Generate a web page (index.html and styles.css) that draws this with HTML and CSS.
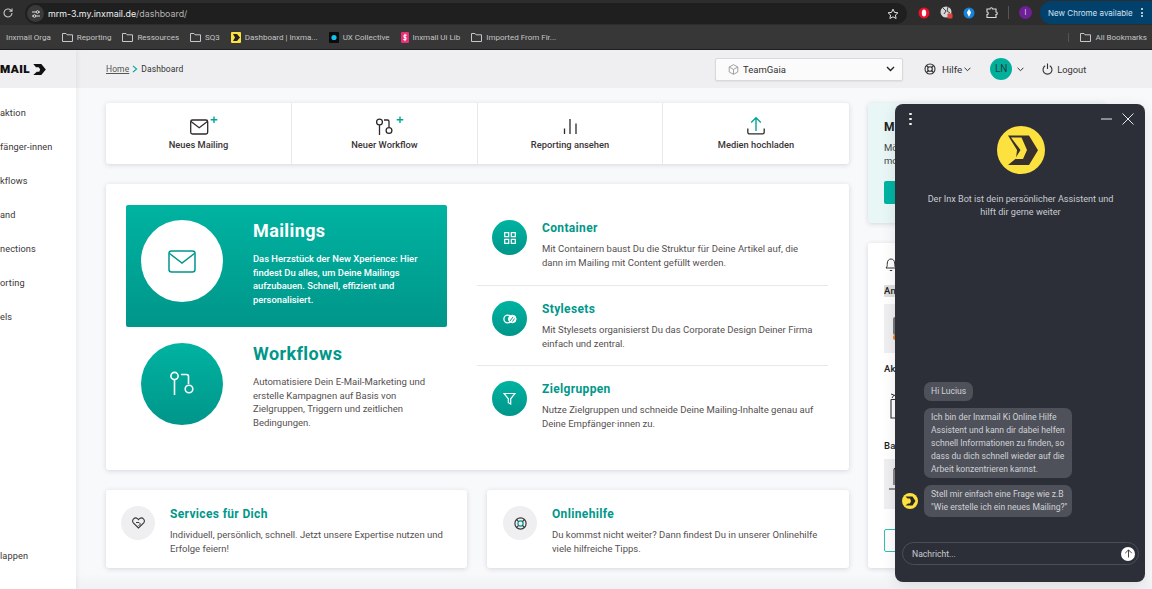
FILE: index.html
```html
<!DOCTYPE html>
<html lang="de">
<head>
<meta charset="utf-8">
<title>Dashboard | Inxmail</title>
<link rel="stylesheet" href="styles.css">
</head>
<body>
<header class="browser">
  <div class="toolbar">
    <svg class="reload" width="12" height="12" viewBox="0 0 12 12"><path d="M10 6a4 4 0 1 1-1.2-2.9L10 4.2M10 1.6v2.700H7.300" fill="none" stroke="#c7c7c7" stroke-width="1.100"/></svg>
    <div class="omnibox">
      <span class="site-btn"><svg width="10" height="10" viewBox="0 0 10 10"><path d="M1 3h4M8 3h1M1 7h1M5 7h4" stroke="#ddd" stroke-width="1"/><circle cx="6.500" cy="3" r="1.300" fill="none" stroke="#ddd"/><circle cx="3.500" cy="7" r="1.300" fill="none" stroke="#ddd"/></svg></span>
      <span class="url"><b>mrm-3.my.inxmail.de</b>/dashboard/</span>
      <svg class="star" width="12" height="12" viewBox="0 0 12 12"><path d="M6 1.200l1.500 3.200 3.400.4-2.500 2.300.7 3.400L6 8.800l-3.100 1.700.7-3.400L1.100 4.800l3.400-.4z" fill="none" stroke="#e3e3e3" stroke-width="1"/></svg>
    </div>
    <div class="ext-icons">
      <svg width="12" height="12" viewBox="0 0 12 12"><circle cx="6" cy="6" r="5.500" fill="#e8112d"/><ellipse cx="6" cy="6" rx="2.200" ry="3.500" fill="#fff"/></svg>
      <svg width="13" height="13" viewBox="0 0 13 13"><circle cx="6" cy="6" r="5.500" fill="#d5d5d5"/><path d="M3 2l3 3-2 3M8 1l-1 4 3 2" stroke="#444" fill="none"/><rect x="7.500" y="7.500" width="5" height="5" rx="1" fill="#e0423c"/></svg>
      <svg width="12" height="12" viewBox="0 0 12 12"><circle cx="6" cy="6" r="5.500" fill="#1583d8"/><path d="M6 2l2.200 3.500L6 10 3.800 5.500z" fill="#fff"/></svg>
      <svg width="13" height="13" viewBox="0 0 13 13"><path d="M2 3h3a1.300 1.300 0 0 1 2.600 0H11v3a1.300 1.300 0 0 1 0 2.600V11.500H2V8.600a1.300 1.300 0 0 0 0-2.600z" fill="none" stroke="#dcdcdc" stroke-width="1.100"/></svg>
      <span class="tb-sep"></span>
      <span class="profile">I</span>
    </div>
    <div class="update-pill"><span>New Chrome available</span><i class="kebab"><em></em><em></em><em></em></i></div>
  </div>
  <nav class="bookmarks">
    <span class="bm bm-first">Inxmail Orga</span>
    <span class="bm"><svg class="folder" width="11" height="9" viewBox="0 0 11 9"><path d="M.5 8.500V.5h3.500l1 1.300h5.500v6.700z" fill="none" stroke="#c7c7c7"/></svg>Reporting</span>
    <span class="bm"><svg class="folder" width="11" height="9" viewBox="0 0 11 9"><path d="M.5 8.500V.5h3.500l1 1.300h5.500v6.700z" fill="none" stroke="#c7c7c7"/></svg>Ressources</span>
    <span class="bm"><svg class="folder" width="11" height="9" viewBox="0 0 11 9"><path d="M.5 8.500V.5h3.500l1 1.300h5.500v6.700z" fill="none" stroke="#c7c7c7"/></svg>SQ3</span>
    <span class="bm"><svg width="10" height="11" viewBox="0 0 10 11"><rect width="10" height="11" rx="1" fill="#fde23f"/><path d="M2 2h4l3 3.500L6 9H2l2-3.500z" fill="#222"/></svg>Dashboard | Inxma...</span>
    <span class="bm"><svg width="10" height="11" viewBox="0 0 10 11"><rect width="10" height="11" rx="1" fill="#0b0b0b"/><circle cx="5" cy="5.500" r="2.600" fill="#12c2f4"/></svg>UX Collective</span>
    <span class="bm"><svg width="8" height="11" viewBox="0 0 8 11"><rect width="8" height="11" rx="1" fill="#ec2d78"/><path d="M5.800 3.200H3v2.200h2v2.200H2.200M4 1.800v7.400" stroke="#fff" fill="none"/></svg>Inxmail Ui Lib</span>
    <span class="bm"><svg class="folder" width="11" height="9" viewBox="0 0 11 9"><path d="M.5 8.500V.5h3.500l1 1.300h5.500v6.700z" fill="none" stroke="#c7c7c7"/></svg>Imported From Fir...</span>
    <span class="bm bm-all"><svg class="folder" width="11" height="9" viewBox="0 0 11 9"><path d="M.5 8.500V.5h3.500l1 1.300h5.500v6.700z" fill="none" stroke="#c7c7c7"/></svg>All Bookmarks</span>
  </nav>
</header>

<div class="app">
  <aside class="sidebar">
    <div class="brand"><span class="brand-name">mail</span>
      <svg width="13" height="13" viewBox="0 0 13 13"><path d="M.3 1H8.300L12.800 6.500 8.300 12H.3L3.800 8.800H6.200L7.200 6.500 5.800 4.200H3z" fill="#111"/></svg>
    </div>
    <ul class="side-nav">
      <li>aktion</li><li>fänger-innen</li><li>kflows</li><li>and</li><li>nections</li><li>orting</li><li>els</li>
    </ul>
    <div class="collapse">lappen</div>
  </aside>

  <div class="workspace">
    <div class="topbar">
      <div class="crumbs"><a class="crumb-link">Home</a>
        <svg width="6" height="8" viewBox="0 0 6 8"><path d="M1 .8L4.600 4 1 7.200" fill="none" stroke="#00a594" stroke-width="1.100"/></svg>
        <span>Dashboard</span></div>
      <div class="team-select">
        <svg width="11" height="11" viewBox="0 0 11 11"><path d="M5.500.7l4.300 2.300v5L5.500 10.300 1.200 8V3zM1.200 3l4.300 2.400L9.800 3M5.500 5.400v4.900" fill="none" stroke="#999" stroke-width=".9"/></svg>
        <span class="team-name">TeamGaia</span>
        <svg class="team-chev" width="9" height="6" viewBox="0 0 9 6"><path d="M1 1l3.500 3.500L8 1" fill="none" stroke="#222" stroke-width="1.400"/></svg>
      </div>
      <div class="help">
        <svg width="12" height="12" viewBox="0 0 12 12"><circle cx="6" cy="6" r="5" fill="none" stroke="#333" stroke-width="1.100"/><circle cx="6" cy="6" r="2.300" fill="none" stroke="#333" stroke-width="1.100"/><path d="M2.500 2.500l2 2M9.500 2.500l-2 2M2.500 9.500l2-2M9.500 9.500l-2-2" stroke="#333" stroke-width="1.100"/></svg>
        <span>Hilfe</span>
        <svg width="7" height="5" viewBox="0 0 7 5"><path d="M.6.8l2.900 2.900L6.400.8" fill="none" stroke="#333"/></svg>
      </div>
      <div class="user"><span class="avatar">LN</span>
        <svg width="7" height="5" viewBox="0 0 7 5"><path d="M.6.8l2.900 2.900L6.400.8" fill="none" stroke="#333"/></svg>
      </div>
      <div class="logout">
        <svg width="11" height="12" viewBox="0 0 11 12"><path d="M3.200 2.800a4.500 4.500 0 1 0 4.600 0M5.500 .5v5.500" fill="none" stroke="#333" stroke-width="1.100"/></svg>
        <span>Logout</span>
      </div>
    </div>

    <div class="content">
      <div class="col-main">
        <section class="quick card">
          <div class="quick-cell">
            <svg width="38" height="22" viewBox="0 0 38 22"><rect x="10.700" y="6" width="17" height="14" rx="1.800" fill="none" stroke="#2e2a2b" stroke-width="1.300"/><path d="M11 7.500l8.200 6.200 8.200-6.200" fill="none" stroke="#2e2a2b" stroke-width="1.300"/><path d="M34 2.500v6.500M30.700 5.800h6.600" stroke="#00a594" stroke-width="1.400"/></svg>
            <span>Neues Mailing</span>
          </div>
          <div class="quick-cell">
            <svg width="38" height="22" viewBox="0 0 38 22"><circle cx="13.500" cy="8" r="2.900" fill="none" stroke="#2e2a2b" stroke-width="1.300"/><path d="M13.500 11v10M18 6h3.500a1.500 1.500 0 0 1 1.500 1.500V13" fill="none" stroke="#2e2a2b" stroke-width="1.300"/><circle cx="23" cy="16.500" r="2.900" fill="none" stroke="#2e2a2b" stroke-width="1.300"/><path d="M34 2.500v6.500M30.700 5.800h6.600" stroke="#00a594" stroke-width="1.400"/></svg>
            <span>Neuer Workflow</span>
          </div>
          <div class="quick-cell">
            <svg width="38" height="22" viewBox="0 0 38 22"><path d="M13.500 14.500V20M19 5v15M25 9.500V20" fill="none" stroke="#2e2a2b" stroke-width="1.300"/></svg>
            <span>Reporting ansehen</span>
          </div>
          <div class="quick-cell">
            <svg width="38" height="22" viewBox="0 0 38 22"><path d="M19 17V4M14.200 8.500L19 3.800l4.800 4.700" fill="none" stroke="#00a594" stroke-width="1.400"/><path d="M10.800 14.500v3.800a1.600 1.600 0 0 0 1.600 1.600h13.200a1.600 1.600 0 0 0 1.600-1.600v-3.800" fill="none" stroke="#2e2a2b" stroke-width="1.300"/></svg>
            <span>Medien hochladen</span>
          </div>
        </section>

        <section class="overview card">
          <div class="overview-left">
            <article class="feature feature-active">
              <span class="feature-disc">
                <svg width="28" height="23" viewBox="0 0 28 23"><rect x="1" y="1" width="26" height="21" rx="2.500" fill="none" stroke="#00978a" stroke-width="1.500"/><path d="M1.500 3.500L14 13 26.500 3.500" fill="none" stroke="#00978a" stroke-width="1.500"/></svg>
              </span>
              <div class="feature-text">
                <h2>Mailings</h2>
                <p>Das Herzstück der New Xperience: Hier findest Du alles, um Deine Mailings aufzubauen. Schnell, effizient und personalisiert.</p>
              </div>
            </article>
            <article class="feature">
              <span class="feature-disc">
                <svg width="26" height="26" viewBox="0 0 26 26"><circle cx="5.500" cy="5" r="3.600" fill="none" stroke="#fff" stroke-width="1.600"/><path d="M5.500 8.700V24M12 3.500h5.500a2 2 0 0 1 2 2V13" fill="none" stroke="#fff" stroke-width="1.600"/><circle cx="20" cy="18" r="3.800" fill="none" stroke="#fff" stroke-width="1.600"/></svg>
              </span>
              <div class="feature-text">
                <h2>Workflows</h2>
                <p>Automatisiere Dein E-Mail-Marketing und erstelle Kampagnen auf Basis von Zielgruppen, Triggern und zeitlichen Bedingungen.</p>
              </div>
            </article>
          </div>
          <div class="overview-right">
            <article class="topic">
              <span class="topic-disc"><svg width="12" height="12" viewBox="0 0 12 12"><path d="M.7.7h4v4h-4zM7.300.7h4v4h-4zM.7 7.300h4v4h-4zM7.300 7.300h4v4h-4z" fill="none" stroke="#fff" stroke-width="1.200"/></svg></span>
              <div class="topic-text"><h3>Container</h3><p>Mit Containern baust Du die Struktur für Deine Artikel auf, die dann im Mailing mit Content gefüllt werden.</p></div>
            </article>
            <article class="topic">
              <span class="topic-disc"><svg width="14" height="10" viewBox="0 0 14 10"><circle cx="4.700" cy="5" r="3.800" fill="none" stroke="#fff" stroke-width="1.300"/><circle cx="9.300" cy="5" r="3.800" fill="#fff" stroke="#fff"/><path d="M7 7l3-4M9.500 7.500l2-3" stroke="#00a594"/></svg></span>
              <div class="topic-text"><h3>Stylesets</h3><p>Mit Stylesets organisierst Du das Corporate Design Deiner Firma einfach und zentral.</p></div>
            </article>
            <article class="topic">
              <span class="topic-disc"><svg width="13" height="13" viewBox="0 0 13 13"><path d="M1 1.500h11L7.700 6.800v5.200L5.300 10.700V6.800z" fill="none" stroke="#fff" stroke-width="1.200"/></svg></span>
              <div class="topic-text"><h3>Zielgruppen</h3><p>Nutze Zielgruppen und schneide Deine Mailing-Inhalte genau auf Deine Empfänger·innen zu.</p></div>
            </article>
          </div>
        </section>

        <section class="extras">
          <article class="extra card">
            <span class="extra-disc"><svg width="13" height="12" viewBox="0 0 13 12"><path d="M6.500 11L1.300 5.800a3 3 0 0 1 4.200-4.200l1 1 1-1a3 3 0 0 1 4.200 4.200z" fill="none" stroke="#3a3a3a" stroke-width="1.100"/><path d="M4 5.500h3l1.500 1.500-2 2" fill="none" stroke="#3a3a3a" stroke-width="1"/></svg></span>
            <div class="extra-text"><h3>Services für Dich</h3><p>Individuell, persönlich, schnell. Jetzt unsere Expertise nutzen und Erfolge feiern!</p></div>
          </article>
          <article class="extra card">
            <span class="extra-disc"><svg width="13" height="13" viewBox="0 0 13 13"><circle cx="6.500" cy="6.500" r="5.600" fill="none" stroke="#3a3a3a" stroke-width="1.200"/><circle cx="6.500" cy="6.500" r="2.600" fill="none" stroke="#00978a" stroke-width="1.200"/><path d="M2.600 2.600l2 2M10.400 2.600l-2 2M2.600 10.400l2-2M10.400 10.400l-2-2" stroke="#3a3a3a" stroke-width="1.200"/></svg></span>
            <div class="extra-text"><h3>Onlinehilfe</h3><p>Du kommst nicht weiter? Dann findest Du in unserer Onlinehilfe viele hilfreiche Tipps.</p></div>
          </article>
        </section>
      </div>

      <div class="col-side">
        <section class="promo card">
          <h4>M</h4>
          <p>Mö<br>mo</p>
          <span class="promo-btn"></span>
        </section>
        <section class="notes card">
          <svg class="bell" width="12" height="15" viewBox="0 0 12 15"><path d="M1 11c1.500-1.500 1.200-3 1.300-5C2.500 3.500 4 2 6 2s3.500 1.500 3.700 4c.1 2-.2 3.500 1.300 5zM4.800 13.500h2.400" fill="none" stroke="#333" stroke-width="1"/></svg>
          <span class="note-label note-mark">An</span>
          <div class="note-block note-block-a"><span class="chip-grey"></span><span class="chip-orange"></span></div>
          <span class="note-label note-akt">Akt</span>
          <svg class="note-clip" width="11" height="26" viewBox="0 0 11 26"><path d="M1 6.500h10M1 6.500V25h10" fill="none" stroke="#333" stroke-width="1.100"/><path d="M1 1l4 1.500M2 5l2-3" stroke="#333"/></svg>
          <span class="note-label note-ban">Ba</span>
          <div class="note-block note-block-b"><svg width="11" height="24" viewBox="0 0 11 24"><path d="M5 18V3a2 2 0 0 1 2-2h4M0 22h11" fill="none" stroke="#333" stroke-width="1.100"/></svg></div>
          <span class="note-btn"></span>
        </section>
      </div>
    </div>
  </div>

  <aside class="chat">
    <div class="chat-head">
      <i class="chat-dots"><em></em><em></em><em></em></i>
      <div class="chat-win">
        <svg width="11" height="2" viewBox="0 0 11 2"><path d="M0 1h11" stroke="#e8e8e8"/></svg>
        <svg width="12" height="12" viewBox="0 0 12 12"><path d="M.5.5l11 11M11.500.5l-11 11" stroke="#e8e8e8"/></svg>
      </div>
    </div>
    <svg class="chat-logo" width="48" height="48" viewBox="0 0 48 48"><circle cx="24" cy="24" r="24" fill="#fde23f"/><path d="M11 9.500H32L41 24.300 32 39H11L19 32.500 20 24z" fill="#38302c"/><path d="M14 11.500H24.500L30 24 26 33H18L23.500 24z" fill="#fde23f"/></svg>
    <p class="chat-intro">Der Inx Bot ist dein persönlicher Assistent und hilft dir gerne weiter</p>
    <div class="chat-log">
      <div class="msg">Hi Lucius</div>
      <div class="msg msg-wide">Ich bin der Inxmail Ki Online Hilfe<br>Assistent und kann dir dabei helfen<br>schnell Informationen zu finden, so<br>dass du dich schnell wieder auf die<br>Arbeit konzentrieren kannst.</div>
      <div class="msg-row">
        <svg class="bot" width="16" height="16" viewBox="0 0 16 16"><circle cx="8" cy="8" r="8" fill="#fde23f"/><path d="M3.500 3.500H10.500L13.500 8 10.500 12.500H3.500L6 10.500H8L9 8 8 5.600H5.500z" fill="#2c2624"/></svg>
        <div class="msg msg-wide">Stell mir einfach eine Frage wie z.B<br>"Wie erstelle ich ein neues Mailing?"</div>
      </div>
    </div>
    <div class="chat-input">
      <span>Nachricht...</span>
      <span class="send"><svg width="9" height="9" viewBox="0 0 9 9"><path d="M4.500 8.500V1M1.200 4.200l3.300-3.300 3.300 3.300" fill="none" stroke="#333" stroke-width=".9"/></svg></span>
    </div>
  </aside>
</div>
</body>
</html>
```
FILE: styles.css
```css
* { box-sizing: border-box; }
html, body { margin: 0; height: 100%; }
body {
  width: 1152px; height: 589px; overflow: hidden;
  display: flex; flex-direction: column;
  font-family: "Roboto", "Liberation Sans", sans-serif;
  background: #f8f9fb; color: #2e2a2b;
}
h2, h3, h4, p, ul { margin: 0; padding: 0; }
ul { list-style: none; }
svg { display: block; flex: none; }

/* browser chrome */
.browser { flex: none; height: 50px; font-family: "Inter", "Liberation Sans", sans-serif; }
.toolbar { height: 25px; background: #2d2d2d; display: flex; align-items: center; padding-left: 2px; }
.reload { margin-right: 11px; }
.omnibox {
  flex: none; width: 882px; height: 21px; margin-top: 2px; border-radius: 11px; background: #1f1f1f;
  display: flex; align-items: center; padding-left: 2px; padding-right: 8px;
}
.site-btn { width: 17px; height: 17px; border-radius: 50%; background: #3a3a3a; display: flex; align-items: center; justify-content: center; }
.url { margin-left: 4px; font-size: 8.900px; color: #b4b4b4; }
.url b { font-weight: 400; color: #f0f0f0; }
.star { margin-left: auto; }
.ext-icons { flex: none; display: flex; align-items: center; gap: 10px; margin-left: 11px; width: 122px; }
.tb-sep { width: 1px; height: 13px; background: #555; }
.profile { width: 13px; height: 13px; border-radius: 50%; background: #6f1f97; color: #ddd; font-size: 7px; line-height: 13px; text-align: center; }
.update-pill {
  flex: none; width: 112px; height: 23px; border-radius: 12px 0 0 12px; background: #02416c; color: #cfe4f5;
  display: flex; align-items: center; padding-left: 8px; font-size: 8px; white-space: nowrap;
}
.kebab { margin-left: 8px; display: flex; flex-direction: column; gap: 1.500px; }
.kebab em { width: 2px; height: 2px; border-radius: 50%; background: #e6f1fa; }
.bookmarks {
  height: 25px; background: #373737; border-bottom: 1px solid #1d1d1d;
  display: flex; align-items: center; gap: 11px; padding-left: 6px; padding-right: 5px;
  font-family: "Roboto", "Liberation Sans", sans-serif;
  font-size: 8px; color: #c4c4c4; white-space: nowrap;
}
.bm { display: flex; align-items: center; gap: 4px; }
.bm-all { margin-left: auto; padding-left: 11px; border-left: 1px solid #555; }

/* app frame */
.app { flex: 1; min-height: 0; display: flex; position: relative; }
.sidebar { flex: none; width: 76px; background: #fff; box-shadow: 1px 0 5px rgba(0,0,0,.07); display: flex; flex-direction: column; font-size: 9.200px; letter-spacing: .1px; color: #3b3637; position: relative; z-index: 1; }
.brand { height: 38px; background: #efeff1; display: flex; align-items: center; gap: 3px; }
.brand-name { font-weight: 900; font-size: 13.500px; font-variant: small-caps; letter-spacing: .5px; color: #111; line-height: 12px; margin-top: -3px; }
.side-nav { margin-top: 8px; }
.side-nav li { height: 34px; line-height: 34px; }
.collapse { margin-top: 215px; line-height: 14px; }

.workspace { flex: 1; min-width: 0; display: flex; flex-direction: column; background: linear-gradient(#f8f9fb 97%, #f0f1f4); }
.topbar { flex: none; height: 38px; background: #efeff1; display: flex; align-items: center; padding-left: 30px; font-size: 9.500px; color: #333; }
.crumbs { width: 609px; display: flex; align-items: center; gap: 3px; font-size: 8.500px; letter-spacing: .1px; }
.crumb-link { text-decoration: underline; color: #555; }
.team-select { width: 188px; height: 23px; background: #fbfbfc; border: 1px solid #d9d9dc; border-radius: 2px; box-shadow: 0 1px 2px rgba(0,0,0,.06); display: flex; align-items: center; padding: 0 7px 0 12px; gap: 4px; }
.team-name { font-size: 9.500px; }
.team-chev { margin-left: auto; }
.help { margin-left: 21px; display: flex; align-items: center; gap: 6px; font-size: 9.800px; }
.help span { margin-right: -4px; }
.user { margin-left: 19px; display: flex; align-items: center; gap: 5px; }
.avatar { width: 22px; height: 22px; border-radius: 50%; background: #00b09b; color: #24423f; font-size: 10px; line-height: 22px; text-align: center; }
.logout { margin-left: 18px; display: flex; align-items: center; gap: 4px; font-size: 9.300px; }

.content { flex: 1; min-height: 0; display: grid; grid-template-columns: 743px 237px; column-gap: 19px; padding: 15px 0 0 30px; }
.col-main { display: flex; flex-direction: column; gap: 20px; }
.card { background: #fff; border-radius: 3px; box-shadow: 0 1px 5px rgba(60,60,70,.18); }

.quick { height: 61px; display: grid; grid-template-columns: 185px 186px 185px 187px; }
.quick-cell { display: flex; flex-direction: column; align-items: center; padding-top: 11px; font-size: 9.300px; line-height: 14px; font-weight: 500; color: #3a3536; }
.quick-cell span { margin-top: 2px; }
.quick-cell + .quick-cell { border-left: 1px solid #e9e9ec; }

.overview { height: 286px; padding: 21px 21px 0 20px; display: grid; grid-template-columns: 321px 351px; column-gap: 30px; }
.feature { display: flex; gap: 30px; padding: 15px 0 15px 15px; margin-bottom: 1px; }
.feature-active { height: 122px; background: linear-gradient(#00b3a1, #00968a); border-radius: 2px; color: #fff; }
.feature-disc { flex: none; width: 82px; height: 82px; border-radius: 50%; background: linear-gradient(#00b3a1, #00968a); display: flex; align-items: center; justify-content: center; }
.feature-active .feature-disc { background: #fff; }
.feature-text { padding-top: 1px; }
.feature h2 { font-size: 18px; line-height: 20px; font-weight: 700; letter-spacing: .4px; color: #00978a; }
.feature p { margin-top: 11px; font-size: 9.500px; line-height: 13.700px; color: #555051; }
.feature-active h2 { color: #fff; }
.feature-active p { color: #fff; font-size: 9.400px; font-weight: 500; }

.topic { height: 80px; padding: 15px 8px 0 15px; display: flex; gap: 15px; }
.topic + .topic { border-top: 1px solid #e8e8ea; }
.topic-disc { flex: none; width: 35px; height: 35px; border-radius: 50%; background: linear-gradient(#00b3a1, #00968a); display: flex; align-items: center; justify-content: center; }
.topic h3, .extra h3 { font-size: 12px; line-height: 16px; font-weight: 700; letter-spacing: .35px; color: #00978a; }
.topic p, .extra p { margin-top: 6px; font-size: 9.500px; line-height: 14px; color: #555051; }

.extras { display: grid; grid-template-columns: 361px 362px; column-gap: 20px; }
.extra { height: 78px; padding: 16px 20px 0 15px; display: flex; gap: 15px; }
.extra + .extra { padding-left: 16px; }
.extra-disc { flex: none; width: 34px; height: 34px; border-radius: 50%; background: #efeff1; display: flex; align-items: center; justify-content: center; }

.col-side { display: flex; flex-direction: column; gap: 20px; }
.promo { height: 120px; background: #e8f7f5; padding: 17px 16px 0; font-size: 9.500px; }
.promo h4 { font-size: 12px; line-height: 14px; color: #222; }
.promo p { margin-top: 7px; line-height: 13px; color: #444; }
.promo-btn { display: block; width: 100px; height: 23px; margin-top: 14px; background: #00b3a1; border-radius: 2px; }
.notes { height: 325px; padding: 14px 16px 0; display: flex; flex-direction: column; align-items: flex-start; font-size: 9.500px; }
.bell { margin-left: 1px; }
.note-label { font-weight: 500; line-height: 12px; color: #222; letter-spacing: .2px; }
.note-mark { margin-top: 13px; background: #dedede; }
.note-block { width: 100px; background: #efeff1; display: flex; }
.note-block-a { height: 49px; margin-top: 7px; position: relative; }
.chip-grey { width: 8px; height: 18px; margin: 13px 0 0 9px; background: #777; border-radius: 2px; }
.chip-orange { position: absolute; left: 9px; top: 31px; width: 4px; height: 5px; background: #ef7d22; border-radius: 2px; }
.note-akt { margin-top: 10px; }
.note-clip { margin: 18px 0 0 6px; }
.note-ban { margin-top: 21px; }
.note-block-b { height: 50px; margin-top: 7px; padding: 8px 0 0 5px; }
.note-btn { width: 100px; height: 23px; margin-top: 20px; border: 1px solid #30bfb0; border-radius: 2px; }

/* chat window */
.chat {
  position: absolute; left: 895px; top: 54px; width: 250px; height: 478px;
  background: #2c2f38; border-radius: 8px; box-shadow: 0 3px 14px rgba(0,0,0,.1);
  display: flex; flex-direction: column; align-items: center;
  padding: 0 6px 0 7px; color: #c9cbd0;
  font-size: 8.600px; z-index: 2;
}
.chat > * { flex: none; }
.chat-head { width: 100%; height: 20px; margin-top: 5px; padding: 0 5px 0 7px; display: flex; align-items: center; justify-content: space-between; }
.chat-dots { display: flex; flex-direction: column; gap: 2.300px; }
.chat-dots em { width: 2.500px; height: 2.500px; background: #f0f0f0; border-radius: 50%; }
.chat-win { display: flex; align-items: center; gap: 10px; }
.chat-logo { margin-top: -3px; }
.chat-intro { margin-top: 19px; width: 200px; text-align: center; line-height: 12.500px; font-size: 9.100px; }
.chat-log { margin-top: 164px; width: 100%; display: flex; flex-direction: column; align-items: flex-start; gap: 7px; padding-left: 22px; }
.msg { background: #4e515a; border-radius: 7px; padding: 3px 7px; line-height: 12.900px; color: #d0d2d6; }
.msg-wide { width: 148px; white-space: nowrap; }
.msg-row { display: flex; align-items: center; position: relative; }
.bot { position: absolute; left: -22px; top: 8px; }
.chat-input { width: 100%; height: 23px; margin-top: 25px; border: 1px solid #4a4e58; border-radius: 12px; display: flex; align-items: center; justify-content: space-between; padding: 0 3px 0 9px; }
.send { width: 14px; height: 14px; border-radius: 50%; background: #fff; display: flex; align-items: center; justify-content: center; }
```
